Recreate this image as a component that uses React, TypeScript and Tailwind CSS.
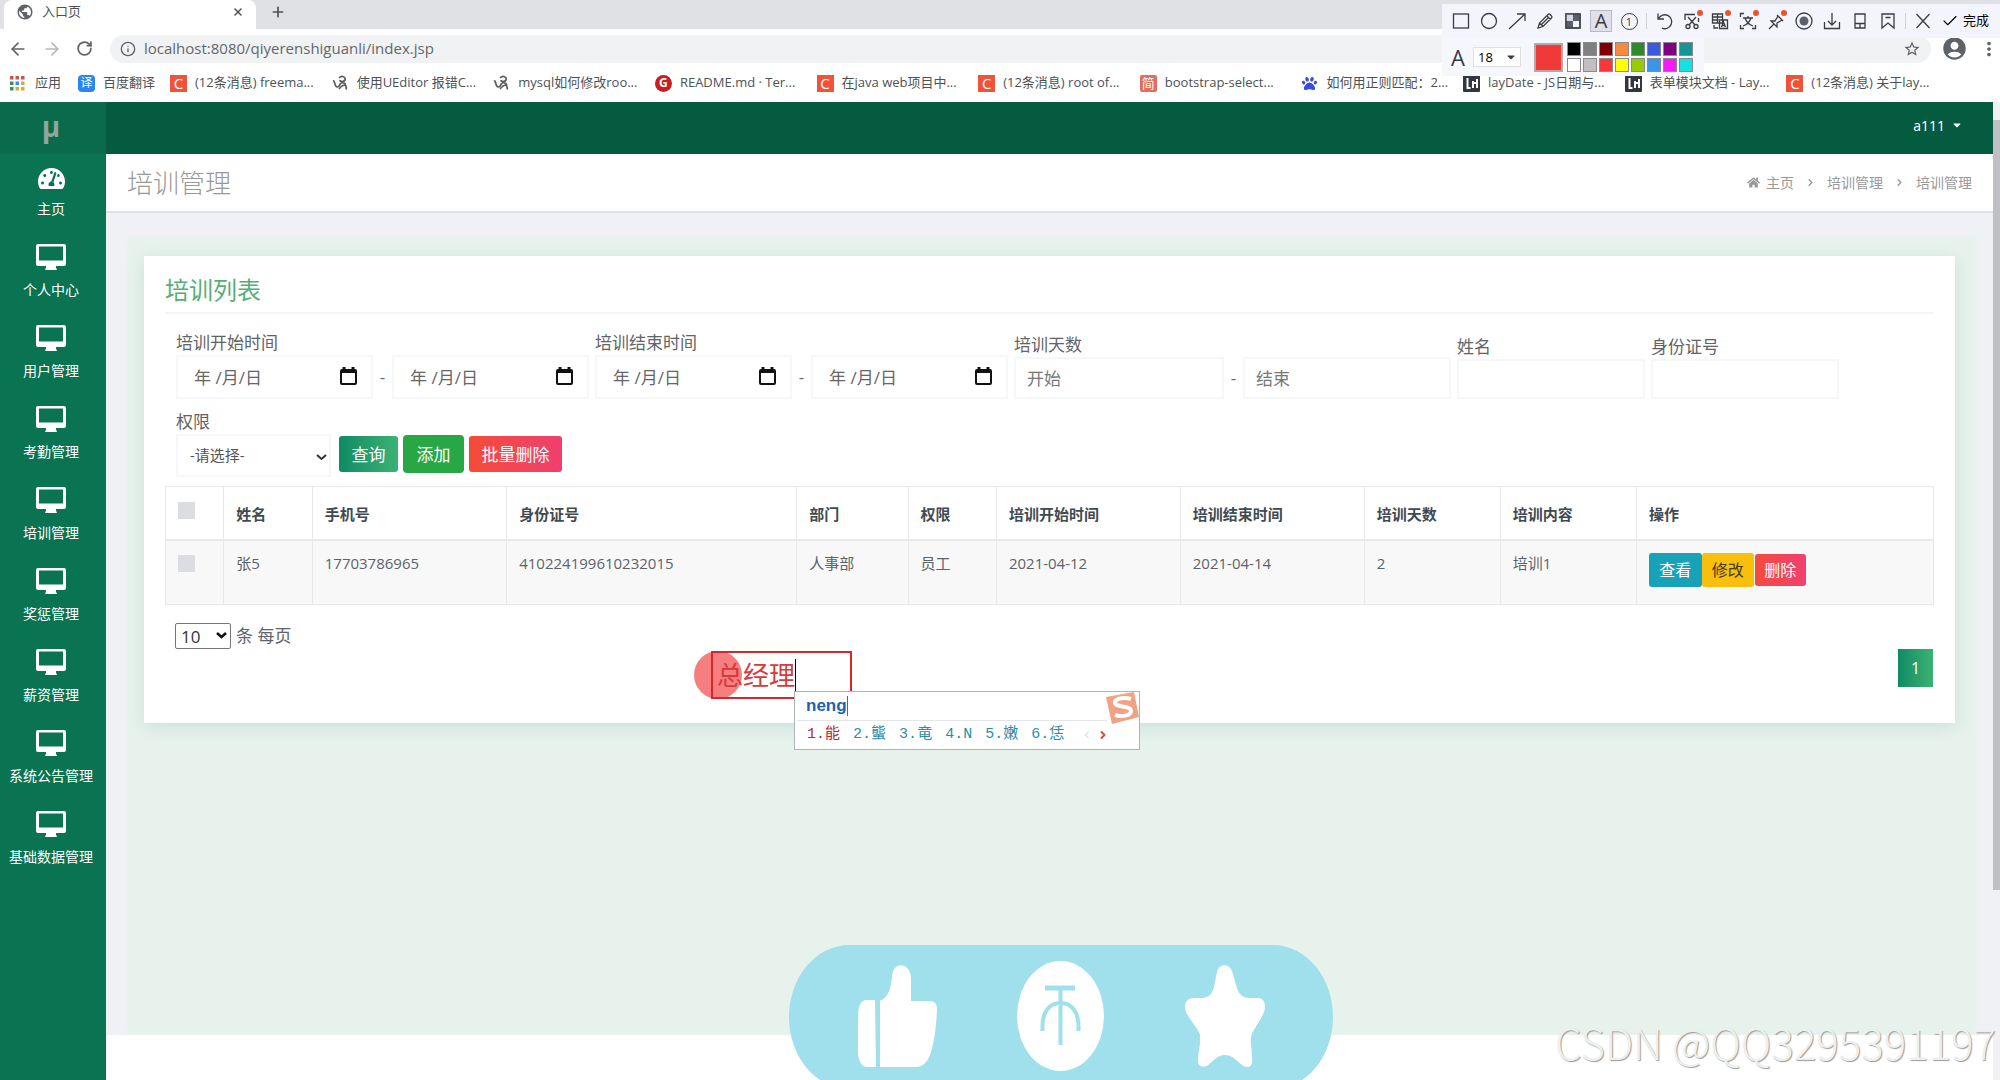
import React, { useState } from 'react'
import { FaCaretDown, FaHome, FaPaw, FaTachometerAlt } from 'react-icons/fa'
import { MdAccountCircle, MdMoreVert, MdPublic, MdStarBorder } from 'react-icons/md'
import { ArrowLeft, ArrowRight, Check, ChevronRight, Info, Plus, RotateCw, X } from 'lucide-react'

type BookmarkKind = 'csdn' | 'ua' | 'gitee' | 'jian' | 'baidu' | 'lay'

const bookmarks: { kind: BookmarkKind; title: string }[] = [
  { kind: 'csdn', title: '(12条消息) freema...' },
  { kind: 'ua', title: '使用UEditor 报错C...' },
  { kind: 'ua', title: 'mysql如何修改roo...' },
  { kind: 'gitee', title: 'README.md · Ter...' },
  { kind: 'csdn', title: '在java web项目中...' },
  { kind: 'csdn', title: '(12条消息) root of...' },
  { kind: 'jian', title: 'bootstrap-select...' },
  { kind: 'baidu', title: '如何用正则匹配：2...' },
  { kind: 'lay', title: 'layDate - JS日期与...' },
  { kind: 'lay', title: '表单模块文档 - Lay...' },
  { kind: 'csdn', title: '(12条消息) 关于lay...' },
]

const menus = ['个人中心', '用户管理', '考勤管理', '培训管理', '奖惩管理', '薪资管理', '系统公告管理', '基础数据管理']

const columns = [
  { title: '姓名', width: 'w-[5%]' },
  { title: '手机号', width: 'w-[11%]' },
  { title: '身份证号', width: 'w-[16.4%]' },
  { title: '部门', width: 'w-[6.3%]' },
  { title: '权限', width: 'w-[5%]' },
  { title: '培训开始时间', width: 'w-[10.4%]' },
  { title: '培训结束时间', width: 'w-[10.4%]' },
  { title: '培训天数', width: 'w-[7.7%]' },
  { title: '培训内容', width: 'w-[7.7%]' },
  { title: '操作', width: '' },
]

const rows = [['张5', '17703786965', '410224199610232015', '人事部', '员工', '2021-04-12', '2021-04-14', '2', '培训1']]

const palette = [
  'bg-black', 'bg-[#808080]', 'bg-[#800000]', 'bg-[#f78a3c]', 'bg-[#2f8a2a]', 'bg-[#3b5bdb]', 'bg-[#800080]', 'bg-[#159595]',
  'bg-white', 'bg-[#c0c0c0]', 'bg-[#fb3838]', 'bg-[#ffff00]', 'bg-[#99cc00]', 'bg-[#3b95e8]', 'bg-[#f31df3]', 'bg-[#16e0e0]',
]

const candidates = ['能', '螚', '竜', 'N', '嫩', '恁']

const BookmarkIcon: React.FC<{ kind: BookmarkKind }> = ({ kind }) => {
  switch (kind) {
    case 'csdn':
      return <span className="flex h-[17px] w-[17px] shrink-0 items-center justify-center bg-[#f0523a] text-[15px] leading-none text-white">C</span>
    case 'gitee':
      return <span className="flex h-[17px] w-[17px] shrink-0 items-center justify-center rounded-full bg-[#c71d23] text-[12px] leading-none font-bold text-white">G</span>
    case 'jian':
      return <span className="flex h-[17px] w-[17px] shrink-0 items-center justify-center rounded-xs bg-[#e26d5c] text-[13px] leading-none text-white">简</span>
    case 'lay':
      return (
        <svg className="h-[17px] w-[17px] shrink-0" viewBox="0 0 17 17" fill="none" stroke="#fff" strokeWidth="2">
          <rect width="17" height="17" rx="1" fill="#34373f" stroke="none" />
          <path d="M4.500 3v10h3M10 13V6M14 4v9M10 8h3" />
        </svg>
      )
    case 'baidu':
      return <FaPaw className="mx-px h-[15px] w-[15px] shrink-0 text-[#3a4be0]" />
    default:
      return (
        <svg className="h-[17px] w-[17px] shrink-0" viewBox="0 0 17 17" fill="none" stroke="#5c5c5c" strokeWidth="1.700">
          <path d="M1 6c2-1 1.500 6 4 6 2 0 3-2 3.500-4M7 3c3-3 7-1 6 2-1 2-5 2-5 0M9 8c2-1 4 0 4.500 2l1 4.500M13 10c-2 0-4 1.500-6 4" />
        </svg>
      )
  }
}

const DesktopIcon: React.FC = () => (
  <svg className="h-[26px] w-[30px]" viewBox="0 0 30 26" fill="currentColor">
    <path fillRule="evenodd" d="M2 0h26a2 2 0 0 1 2 2v18a2 2 0 0 1-2 2h-8v1.500l1 2.500h-12l1-2.500v-1.500H2a2 2 0 0 1-2-2V2a2 2 0 0 1 2-2zm1 2.500v14h24v-14z" />
  </svg>
)

const DateInput: React.FC<{ id?: string; label: string }> = ({ id, label }) => (
  <div className="relative">
    <input
      id={id}
      aria-label={label}
      className="h-11 w-[197px] border-2 border-[#f6f7f8] bg-white pl-4 text-[17px] text-[#555] outline-none placeholder:text-[#666]"
      placeholder="年 /月/日"
    />
    <svg className="pointer-events-none absolute top-3 right-4 h-[18px] w-[17px]" viewBox="0 0 17 18" fill="none" stroke="#111" strokeWidth="2">
      <rect x="1" y="3" width="15" height="14" rx="1" />
      <path d="M1 4.500h15M4 0v4M13 0v4" strokeWidth="3" />
    </svg>
  </div>
)

const Field: React.FC<{ id: string; label: string; children: React.ReactNode }> = ({ id, label, children }) => (
  <div>
    <label htmlFor={id} className="block text-[17px] leading-6 text-[#5f6468]">{label}</label>
    <div className="flex items-center">{children}</div>
  </div>
)

const Dash: React.FC = () => <span className="w-[19px] text-center text-[17px] text-[#666]">-</span>

const Browser: React.FC = () => (
  <div className="h-[102px] bg-white text-[13px] text-[#4d5156]">
    <div className="flex h-[29px] bg-[#dfe1e5] pl-1">
      <div className="flex w-[252px] items-center rounded-t-lg bg-white px-3 pb-[6px]">
        <MdPublic className="h-[18px] w-[18px] text-[#5f6368]" />
        <span className="ml-2">入口页</span>
        <button type="button" aria-label="关闭标签页" className="ml-auto"><X className="h-3 w-3" strokeWidth={3} /></button>
      </div>
      <button type="button" aria-label="新标签页" className="ml-[14px] pb-[6px]"><Plus className="h-4 w-4" strokeWidth={2.5} /></button>
    </div>
    <div className="flex h-[39px] items-center pl-2 text-[#5f6368]">
      <button type="button" aria-label="后退" className="w-[22px]"><ArrowLeft className="h-5 w-5" /></button>
      <button type="button" aria-label="前进" className="ml-3 w-[22px] text-[#b5b8bb]"><ArrowRight className="h-5 w-5" /></button>
      <button type="button" aria-label="刷新" className="ml-3 w-[22px]"><RotateCw className="h-[17px] w-[17px]" strokeWidth={2.5} /></button>
      <div className="ml-3 flex h-7 flex-1 items-center rounded-full bg-[#f1f2f4] px-[10px]">
        <Info className="h-4 w-4" />
        <input aria-label="地址" className="ml-2 flex-1 bg-transparent text-[15px] text-[#63676b] outline-none" defaultValue="localhost:8080/qiyerenshiguanli/index.jsp" />
        <MdStarBorder className="h-[18px] w-[18px]" />
      </div>
      <MdAccountCircle className="ml-[10px] h-[27px] w-[27px]" />
      <MdMoreVert className="ml-[10px] h-[22px] w-[22px]" />
    </div>
    <nav className="flex h-[30px] items-center pl-[10px]">
      <a href="#apps" className="flex w-[68px] items-center gap-[10px]">
        <svg className="h-[15px] w-[15px]" viewBox="0 0 15 15">
          <path fill="#c9544a" d="M0 0h3.500v3.500H0zM5.500 0H9v3.500H5.500zM11 0h3.500v3.500H11z" />
          <path fill="#3e8e58" d="M0 5.500h3.500V9H0zM0 11h3.500v3.500H0z" />
          <path fill="#4285f4" d="M5.500 5.500H9V9H5.500z" />
          <path fill="#d8ab36" d="M11 5.500h3.500V9H11zM5.500 11H9v3.500H5.500zM11 11h3.500v3.500H11z" />
        </svg>
        应用
      </a>
      <a href="#fanyi" className="flex w-[92px] items-center gap-2">
        <span className="flex h-[17px] w-[17px] items-center justify-center rounded-sm bg-[#2b85f0] text-[12px] text-white">译</span>
        百度翻译
      </a>
      <div className="grid flex-1 grid-cols-11 pr-[52px]">
        {bookmarks.map(({ kind, title }) => (
          <a key={title} href="#bookmark" className="flex items-center gap-2 whitespace-nowrap">
            <BookmarkIcon kind={kind} />
            {title}
          </a>
        ))}
      </div>
    </nav>
  </div>
)

const ToolButton: React.FC<{ label: string; dot?: boolean; active?: boolean; children: React.ReactNode }> = ({ label, dot, active, children }) => (
  <button
    type="button"
    aria-label={label}
    className={`relative mx-[3px] flex h-[22px] w-[22px] items-center justify-center ${active ? 'border border-[#b9bac2] bg-[#dfe0e8]' : ''}`}
  >
    {children}
    {dot && <span className="absolute top-0 right-0 h-[6px] w-[6px] rounded-full bg-[#e8552c]" />}
  </button>
)

const ToolIcon: React.FC<{ children: React.ReactNode }> = ({ children }) => (
  <svg className="h-[18px] w-[18px]" viewBox="0 0 18 18" fill="none" stroke="currentColor" strokeWidth="1.300">
    {children}
  </svg>
)

// 截图工具栏
const CaptureToolbar: React.FC = () => (
  <div className="absolute top-1 right-0 w-[558px] text-[#3a3b45]">
    <div className="flex h-[34px] items-center bg-[#f3f4fc] pl-[5px]">
      <ToolButton label="矩形"><ToolIcon><rect x="1.500" y="2" width="15" height="14" /></ToolIcon></ToolButton>
      <ToolButton label="椭圆"><ToolIcon><circle cx="9" cy="9" r="7.500" /></ToolIcon></ToolButton>
      <ToolButton label="箭头"><ToolIcon><path d="M1 17 17 2M9 2h8v7" /></ToolIcon></ToolButton>
      <ToolButton label="画笔"><ToolIcon><path d="m2 16 1.500-5L12 2.500q1-1 2 0L15.500 4q1 1 0 2L7 14.500zM11 4l3.500 3.500M3.500 11 7 14.500M5.500 12.500l7-7" /></ToolIcon></ToolButton>
      <ToolButton label="马赛克">
        <ToolIcon>
          <rect x="2" y="2" width="14" height="14" />
          <path d="M9 2h7v7H9zM2 9h7v7H2z" fill="#5c5f6b" stroke="none" />
          <path d="M2 2h7v7H2z" fill="#d5d8e2" stroke="none" />
          <rect x="2" y="2" width="14" height="14" />
        </ToolIcon>
      </ToolButton>
      <ToolButton label="文字" active><span className="text-[20px] leading-none">A</span></ToolButton>
      <ToolButton label="序号"><span className="flex h-[17px] w-[17px] items-center justify-center rounded-full border border-[#3a3b45] text-[11px] leading-none">1</span></ToolButton>
      <span className="mx-[3px] h-4 w-px bg-[#d0d1d8]" />
      <ToolButton label="撤销"><ToolIcon><path d="M3 1.500V7h6M3.500 6.500A7 7 0 1 1 7 16.200" /></ToolIcon></ToolButton>
      <ToolButton label="裁剪" dot>
        <ToolIcon>
          <path d="M2 8V2.500h10M15.500 6v4M5 5l7 8M13 5l-7 8" />
          <circle cx="5" cy="14.500" r="2" />
          <circle cx="13" cy="14.500" r="2" />
        </ToolIcon>
      </ToolButton>
      <ToolButton label="翻译" dot>
        <ToolIcon>
          <path d="M1.500 2h10v9h-10zM1.500 5h10M1.500 8h6M6.500 2v9M3 13v3h4M8.500 8h8v8.500h-8zM10.500 15l2-5 2 5M11 13.500h3" />
        </ToolIcon>
      </ToolButton>
      <ToolButton label="文字识别" dot>
        <ToolIcon>
          <path d="M1.500 5V1.500H5M1.500 13v3.500H5M13 16.500h3.500V13M4 6h10M9 4v2M6 6q2 6 8 8M12 6q-2 6-8 8" />
        </ToolIcon>
      </ToolButton>
      <ToolButton label="钉住" dot><ToolIcon><path d="m10 3 6 6M11 4l-3 5-4 0 6 6 0-4 5-3M7 12l-5 5" /></ToolIcon></ToolButton>
      <ToolButton label="录制">
        <ToolIcon>
          <circle cx="9" cy="9" r="8" />
          <circle cx="9" cy="9" r="4.500" fill="#5c5f6b" stroke="none" />
        </ToolIcon>
      </ToolButton>
      <ToolButton label="保存"><ToolIcon><path d="M9 1v12M5 9l4 4 4-4M1.500 10v6.500h15V10" /></ToolIcon></ToolButton>
      <ToolButton label="手机"><ToolIcon><path d="M4 2h10v14H4zM4 11.500h10M9 12v4" /></ToolIcon></ToolButton>
      <ToolButton label="收藏"><ToolIcon><path d="M3 2h12v14l-6-5-6 5zM6.500 5.500h5" /></ToolIcon></ToolButton>
      <span className="mx-[3px] h-4 w-px bg-[#d0d1d8]" />
      <ToolButton label="取消"><ToolIcon><path d="m2.500 2 13 14M15.500 2l-13 14" /></ToolIcon></ToolButton>
      <button type="button" className="flex items-center gap-1 text-[13px] whitespace-nowrap text-black">
        <Check className="ml-1 h-[18px] w-[18px]" strokeWidth={1.5} />
        完成
      </button>
    </div>
    <div className="flex h-[38px] w-[262px] items-center bg-[#f6f7fd] pl-2">
      <span className="w-4 text-center text-[22px] leading-none">A</span>
      <div className="relative ml-[7px]">
        <select aria-label="字号" defaultValue="18" className="block h-5 w-12 appearance-none border border-[#e0e0e4] bg-white pl-1 text-[13px] leading-none text-black">
          <option>18</option>
        </select>
        <FaCaretDown className="pointer-events-none absolute top-1 right-1 h-3 w-3" />
      </div>
      <span className="ml-[13px] h-[29px] w-[29px] border-2 border-[#b9a6a6] bg-[#f03a3a]" />
      <div className="ml-1 grid grid-cols-8 gap-[2px]">
        {palette.map((color) => (
          <button key={color} type="button" aria-label={color} className={`h-[14px] w-[14px] border border-[#8a8a8a] ${color}`} />
        ))}
      </div>
    </div>
  </div>
)

const Sidebar: React.FC = () => (
  <aside className="w-[106px] shrink-0 bg-[#0a7351] text-[14px] leading-5 text-white">
    <div className="flex h-[52px] items-center justify-center bg-[#0a6a4b] pr-1 pb-1 text-[28px] font-bold text-[#8fa79c]">μ</div>
    <a href="#home" className="flex h-[81px] flex-col items-center gap-[7px] pt-[11px] pr-1">
      <FaTachometerAlt className="h-[27px] w-[27px]" />
      主页
    </a>
    {menus.map((menu) => (
      <a key={menu} href="#menu" className="flex h-[81px] flex-col items-center gap-[10px] pt-[9px] pr-1 whitespace-nowrap">
        <DesktopIcon />
        {menu}
      </a>
    ))}
  </aside>
)

const SearchForm: React.FC = () => (
  <form className="mt-[17px] pl-[11px]" onSubmit={(e) => e.preventDefault()}>
    <div className="flex flex-wrap items-end gap-x-[6px]">
      <Field id="start-from" label="培训开始时间">
        <DateInput id="start-from" label="培训开始时间" />
        <Dash />
        <DateInput label="培训开始时间止" />
      </Field>
      <Field id="end-from" label="培训结束时间">
        <DateInput id="end-from" label="培训结束时间" />
        <Dash />
        <DateInput label="培训结束时间止" />
      </Field>
      <Field id="days-from" label="培训天数">
        <input id="days-from" placeholder="开始" className="h-[42px] w-[210px] border-2 border-[#f6f7f8] px-[11px] text-[17px] placeholder:text-[#777]" />
        <Dash />
        <input aria-label="培训天数止" placeholder="结束" className="h-[42px] w-[208px] border-2 border-[#f6f7f8] px-[11px] text-[17px] placeholder:text-[#777]" />
      </Field>
      <Field id="name" label="姓名">
        <input id="name" className="h-10 w-[188px] border-2 border-[#f6f7f8] px-3 text-[17px]" />
      </Field>
      <Field id="id-card" label="身份证号">
        <input id="id-card" className="h-10 w-[188px] border-2 border-[#f6f7f8] px-3 text-[17px]" />
      </Field>
    </div>
    <div className="mt-[11px] flex items-end">
      <Field id="role" label="权限">
        <div className="relative">
          <select id="role" className="block h-[43px] w-[155px] appearance-none border-2 border-[#f6f7f8] bg-white pl-3 text-[15px] text-[#555]">
            <option>-请选择-</option>
          </select>
          <svg className="pointer-events-none absolute top-5 right-1 h-[7px] w-[11px]" viewBox="0 0 11 7" fill="none" stroke="#333" strokeWidth="2">
            <path d="M1 1l4.500 4L10 1" />
          </svg>
        </div>
      </Field>
      <div className="mb-1 ml-2 flex items-center gap-[5px] text-[17px] leading-none text-white">
        <button type="submit" className="h-9 w-[59px] rounded-[3px] bg-linear-to-r from-[#0c8b64] to-[#3bb273]">查询</button>
        <button type="button" className="h-[38px] w-[61px] rounded-[4px] bg-[#28a745]">添加</button>
        <button type="button" className="h-9 w-[93px] rounded-[3px] bg-linear-to-r from-[#f44b35] to-[#f03f6e]">批量删除</button>
      </div>
    </div>
  </form>
)

const TrainingTable: React.FC = () => {
  const [checked, setChecked] = useState(false)

  return (
    <table className="mt-[9px] w-full table-fixed border-collapse text-left text-[15px] text-[#5c6368]">
      <thead>
        <tr className="h-[53px] text-[#3f4a52]">
          <th className="w-[3.3%] border border-b-2 border-[#e6e8ea] pb-1 pl-3">
            <input
              type="checkbox"
              aria-label="全选"
              checked={checked}
              onChange={() => setChecked(!checked)}
              className="block h-[17px] w-[17px] appearance-none bg-[#dcdde0] checked:bg-[#0a7351]"
            />
          </th>
          {columns.map(({ title, width }) => (
            <th key={title} className={`border border-b-2 border-[#e6e8ea] pt-[2px] pl-3 font-bold ${width}`}>{title}</th>
          ))}
        </tr>
      </thead>
      <tbody>
        {rows.map((cells) => (
          <tr key={cells[1]} className="h-[65px] bg-[#f8f8f8] align-top">
            <td className="border border-[#e6e8ea] pt-[14px] pl-3">
              <input type="checkbox" aria-label="选择" className="block h-[17px] w-[17px] appearance-none bg-[#dcdde0] checked:bg-[#0a7351]" />
            </td>
            {cells.map((cell, i) => (
              <td key={i} className="border border-[#e6e8ea] pt-3 pl-3 leading-5">{cell}</td>
            ))}
            <td className="border border-[#e6e8ea] pt-3 pl-3">
              <div className="flex items-center text-[16px] leading-none">
                <button type="button" className="h-[34px] w-[53px] rounded-[3px] bg-[#17a2b8] text-white">查看</button>
                <button type="button" className="h-[34px] w-[52px] rounded-[3px] bg-[#f8bf0c] text-[#4a3b10]">修改</button>
                <button type="button" className="ml-px h-8 w-[51px] rounded-[3px] bg-linear-to-r from-[#f44b3f] to-[#f03f6e] text-white">删除</button>
              </div>
            </td>
          </tr>
        ))}
      </tbody>
    </table>
  )
}

// 录屏批注和输入法浮窗
const Annotation: React.FC = () => (
  <div className="absolute top-[651px] left-[694px]">
    <span className="absolute top-0 left-0 h-12 w-12 rounded-full bg-[#f57f7f]" />
    <div className="absolute top-0 left-[17px] flex h-12 w-[141px] items-center border-2 border-[#d9262c] pl-1 text-[26px] leading-none whitespace-nowrap text-[#d8393c]">
      总经理
      <span className="h-8 w-px bg-black" />
    </div>
    <div className="absolute top-10 left-[100px] h-[59px] w-[346px] border border-[#a9b4bb] bg-white">
      <div className="mr-8 ml-[2px] flex h-[29px] items-center border-b border-[#e2e6e8] pl-[9px] font-['Liberation_Sans',sans-serif] text-[17px] font-bold text-[#1c62b0]">
        neng
        <span className="h-5 w-px bg-[#d33]" />
      </div>
      <div className="flex h-[28px] items-center gap-[13px] pl-3 font-['Liberation_Mono','Noto_Sans_CJK_SC',monospace] text-[15px] whitespace-nowrap text-[#2d8da8]">
        {candidates.map((word, i) => (
          <span key={word} className={i === 0 ? 'text-[#b5292f]' : ''}>{i + 1}.{word}</span>
        ))}
        <span className="flex items-center gap-1 pl-1">
          <ChevronRight className="h-3 w-3 rotate-180 text-[#c9c9c9]" />
          <ChevronRight className="h-3 w-3 text-[#d0523a]" strokeWidth={4} />
        </span>
      </div>
      <svg className="absolute top-0 right-0 h-[33px] w-[35px]" viewBox="0 0 35 33" fill="none">
        <path d="M2 5 30 0l5 25-27 7z" fill="#f2a283" />
        <path d="M27 7c-6-2-15-1-16 3-1 6 16 3 16 9 0 5-10 6-16 4" stroke="#fff" strokeWidth="4" />
      </svg>
    </div>
  </div>
)

const LikeBar: React.FC = () => (
  <svg className="absolute -bottom-[9px] left-[789px] h-36 w-[544px]" viewBox="0 0 544 144">
    <rect width="544" height="144" rx="60" ry="72" fill="#a0dfec" />
    <g fill="#fff">
      <path d="M86 55h-8c-6 0-9 6-9 16v36c0 9 4 15 9 15h9zM91 56c9-4 11-14 12-24 0-16 19-16 19 2v22h18c6 0 8 3 8 9-1 20-3 34-7 45-3 8-8 12-14 12H91z" />
      <ellipse cx="271.500" cy="71" rx="43.500" ry="55" />
      <path d="M429 24c3-5 10-5 13 0 4 8 5 22 10 26 4 4 11 3 17 3 7 0 8 8 6 14-4 10-11 17-13 25-1 9 2 16 1 25 0 6-6 6-10 3-5-4-10-10-17-10s-12 6-17 10c-4 3-10 2-10-4 0-9 3-17 2-26-3-9-10-14-14-23-3-7 0-14 8-14 6 0 12 1 16-3 5-5 5-18 8-26z" />
    </g>
    <g fill="none" stroke="#a0dfec">
      <path d="M256 43h30" strokeWidth="5" />
      <path d="M271.500 43v57" strokeWidth="4" />
      <path d="M253.500 86V81c0-14 7-23 18-23s18 9 18 23v5" strokeWidth="4" />
    </g>
  </svg>
)

export default function App() {
  return (
    <div className="relative flex min-h-screen flex-col overflow-hidden bg-white font-['Open_Sans','Noto_Sans_CJK_SC',sans-serif]">
      <Browser />
      <div className="flex flex-1">
        <Sidebar />
        <div className="flex min-w-0 flex-1 flex-col">
          <header className="flex h-[52px] items-center justify-end bg-[#055b40] pr-[30px]">
            <button type="button" className="flex items-center gap-[6px] pb-[6px] text-[14px] text-white">
              a111
              <FaCaretDown className="h-3 w-3" />
            </button>
          </header>
          <div className="flex h-[59px] items-center justify-between border-b-2 border-[#dfe1e5] px-[21px] text-[#999]">
            <h1 className="text-[26px] leading-none font-light">培训管理</h1>
            <nav className="flex items-center text-[14px]">
              <FaHome className="mr-[6px] h-[13px] w-[13px]" />
              <a href="#home">主页</a>
              <ChevronRight className="mx-[11px] h-[11px] w-[11px]" strokeWidth={3} />
              <a href="#training">培训管理</a>
              <ChevronRight className="mx-[11px] h-[11px] w-[11px]" strokeWidth={3} />
              <span>培训管理</span>
            </nav>
          </div>
          <main className="flex flex-1 flex-col bg-[#f0f1f4] pt-[25px] pr-[18px] pl-[22px]">
            <div className="flex-1 bg-[#e7f2ec] pt-[18px] pr-[20px] pl-4 shadow-[0_0_6px_#e4f2ee]">
              <section className="bg-white px-[21px] pt-[18px] pb-9 shadow-[0_4px_16px_rgba(120,170,170,0.25)]">
                <h2 className="border-b-2 border-[#f3f4f5] pb-[6px] text-[24px] leading-8 text-[#57ad79]">培训列表</h2>
                <SearchForm />
                <TrainingTable />
                <div className="mt-[18px] flex items-center gap-[5px] pl-[10px] text-[17px] text-[#5f6468]">
                  <div className="relative">
                    <select id="page-size" className="block h-[26px] w-14 appearance-none rounded-xs border border-[#767676] bg-white pl-[5px] text-[17px] leading-none text-[#333]">
                      <option>10</option>
                    </select>
                    <svg className="pointer-events-none absolute top-[9px] right-1 h-[7px] w-[11px]" viewBox="0 0 11 7" fill="none" stroke="#111" strokeWidth="2.500">
                      <path d="M1 1l4.500 4L10 1" />
                    </svg>
                  </div>
                  <label htmlFor="page-size">条 每页</label>
                </div>
                <div className="flex justify-end pr-px">
                  <button type="button" className="h-[38px] w-[35px] bg-linear-to-r from-[#0c8b64] to-[#3bb273] text-[16px] text-white">1</button>
                </div>
              </section>
            </div>
          </main>
          <footer className="h-[45px] bg-white" />
        </div>
        <div className="flex w-[7px] flex-col bg-[#f1f1f3] pt-[18px]">
          <div className="h-[770px] bg-[#bfc0c3]" />
        </div>
      </div>
      <CaptureToolbar />
      <Annotation />
      <LikeBar />
      <p className="absolute right-1 bottom-2 font-['Noto_Sans_CJK_SC',sans-serif] text-[42px] leading-[60px] font-light text-[#eef0ef] [text-shadow:1px_1px_1px_#999]">
        CSDN @QQ3295391197
      </p>
    </div>
  )
}
